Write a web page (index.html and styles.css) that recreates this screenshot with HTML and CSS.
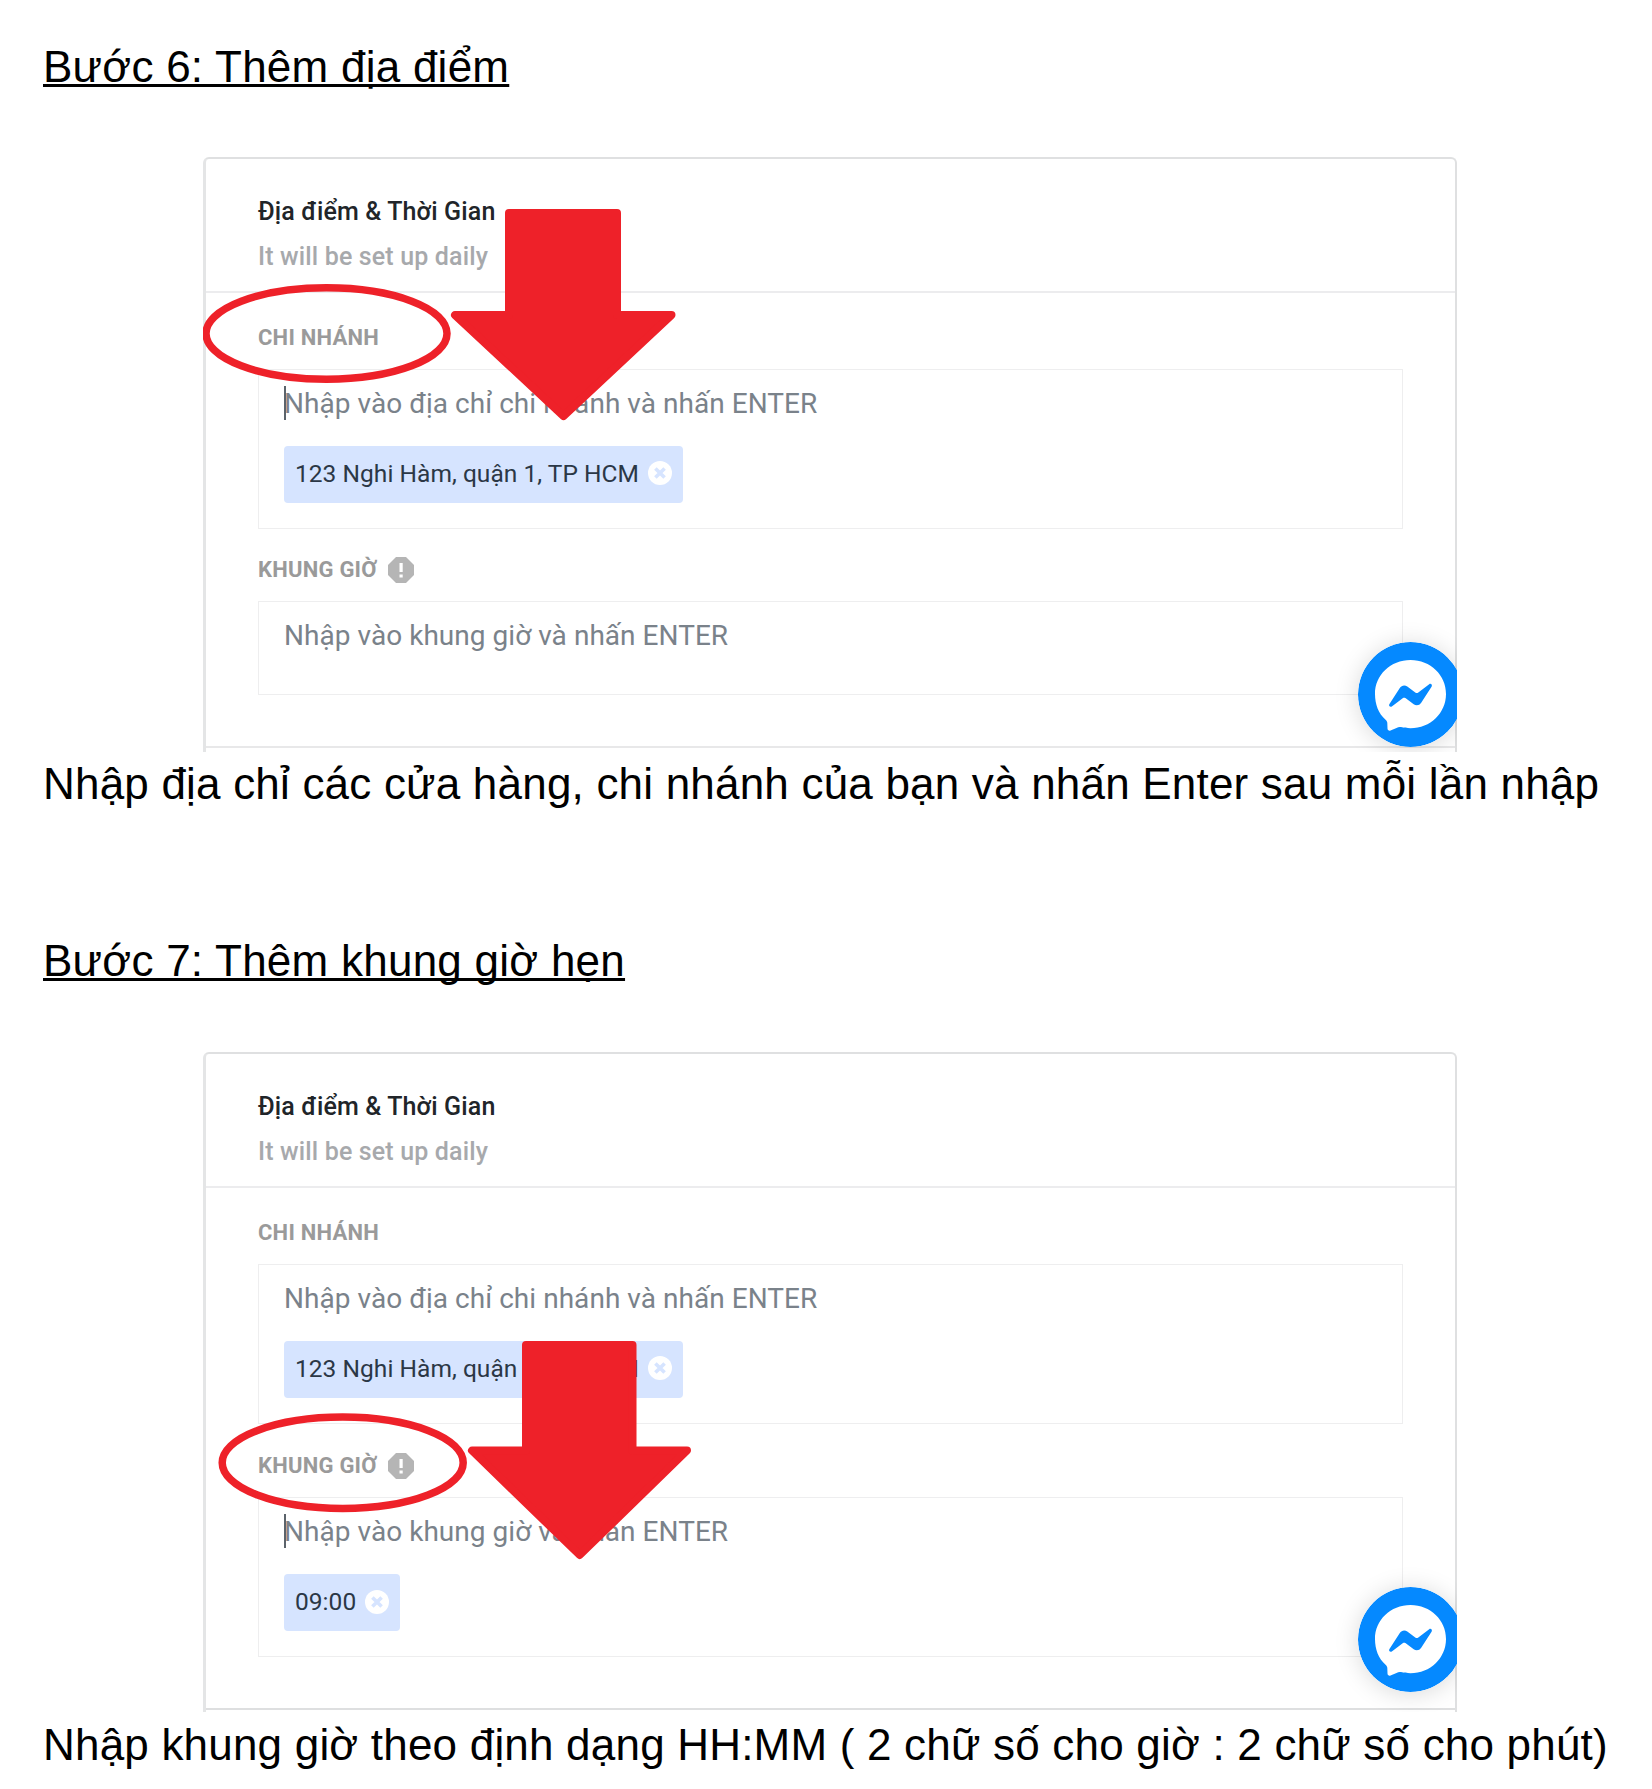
FILE: index.html
```html
<!DOCTYPE html>
<html lang="vi">
<head>
<meta charset="utf-8">
<title>Hướng dẫn</title>
<link rel="stylesheet" href="styles.css">
</head>
<body>
<svg class="defs" width="0" height="0" aria-hidden="true">
  <symbol id="remove" viewBox="0 0 24 24">
    <circle cx="12" cy="12" r="12" fill="#fff"/>
    <path d="M7.400 7.400l9.200 9.200M16.600 7.400l-9.200 9.200" stroke="#d6e4ff" stroke-width="3.6"/>
  </symbol>
  <symbol id="warn" viewBox="0 0 26 26">
    <path d="M8 0h10l8 8v10l-8 8H8l-8-8V8z" fill="#b5b5b5"/>
    <path d="M11.500 6h3.200v9h-3.200zM11.500 17.400h3.200v3.200h-3.200z" fill="#fff"/>
  </symbol>
  <symbol id="chat" viewBox="0 0 105 105">
    <circle cx="52.5" cy="52.5" r="52.5" fill="#0589ff"/>
    <path d="M52.5 18C72.500 18 88 33 88 52S72.500 86.300 52.500 86.300c-3.500 0-6.500-.400-9.500-1.200-1.500-.4-3 0-4.500 1l-6 2.500c-1.500.6-3-.4-3-2l-.2-5.600c0-1.500-.8-2.500-2-3.600C20.500 71.500 17 62.500 17 52 17 33 32.500 18 52.500 18z" fill="#fff"/>
    <path d="M31.300 62.300L41.800 46c1.700-2.700 5-3.300 7.500-1.500l8.300 6.200c.8.500 1.700.5 2.400 0l11.200-8.500c1.500-1.100 3.400.6 2.500 2.200L63.200 60.700c-1.700 2.700-5 3.300-7.500 1.500l-8.300-6.200c-.8-.5-1.700-.5-2.400 0l-11.200 8.500c-1.500 1.100-3.400-.6-2.500-2.200z" fill="#0589ff"/>
  </symbol>
</svg>
<main class="doc">
  <section class="step">
    <h2 class="heading"><span>Bước 6: Thêm địa điểm</span></h2>
    <figure class="shot shot-one">
      <div class="card">
        <header class="card-head">
          <p class="title">Địa điểm &amp; Thời Gian</p>
          <p class="sub">It will be set up daily</p>
        </header>
        <div class="card-body">
          <div class="label">CHI NHÁNH</div>
          <div class="field">
            <div class="hint caret">Nhập vào địa chỉ chi nhánh và nhấn ENTER</div>
            <div class="tag tag-branch"><span>123 Nghi Hàm, quận 1, TP HCM</span><svg class="x"><use href="#remove"/></svg></div>
          </div>
          <div class="label second"><span>KHUNG GIỜ</span><svg class="warn"><use href="#warn"/></svg></div>
          <div class="field">
            <div class="hint">Nhập vào khung giờ và nhấn ENTER</div>
          </div>
        </div>
      </div>
      <svg class="chat"><use href="#chat"/></svg>
      <svg class="marks" viewBox="203 157 1254 595">
        <ellipse class="ring" cx="326.500" cy="333.500" rx="120.500" ry="45.700"/>
        <path class="arrow" d="M509 213H617V315H671.500L563.500 416L455 315H509z"/>
      </svg>
    </figure>
    <p class="caption">Nhập địa chỉ các cửa hàng, chi nhánh của bạn và nhấn Enter sau mỗi lần nhập</p>
  </section>
  <section class="step step-two">
    <h2 class="heading"><span>Bước 7: Thêm khung giờ hẹn</span></h2>
    <figure class="shot shot-two">
      <div class="card">
        <header class="card-head">
          <p class="title">Địa điểm &amp; Thời Gian</p>
          <p class="sub">It will be set up daily</p>
        </header>
        <div class="card-body">
          <div class="label">CHI NHÁNH</div>
          <div class="field">
            <div class="hint">Nhập vào địa chỉ chi nhánh và nhấn ENTER</div>
            <div class="tag tag-branch"><span>123 Nghi Hàm, quận 1, TP HCM</span><svg class="x"><use href="#remove"/></svg></div>
          </div>
          <div class="label second"><span>KHUNG GIỜ</span><svg class="warn"><use href="#warn"/></svg></div>
          <div class="field">
            <div class="hint caret">Nhập vào khung giờ và nhấn ENTER</div>
            <div class="tag tag-time"><span>09:00</span><svg class="x"><use href="#remove"/></svg></div>
          </div>
        </div>
      </div>
      <svg class="chat"><use href="#chat"/></svg>
      <svg class="marks" viewBox="203 1052 1254 660">
        <ellipse class="ring" cx="342.700" cy="1462.700" rx="120.500" ry="45.700"/>
        <path class="arrow" d="M526 1345H632.500V1450.500H687L579.700 1555L472 1450.500H526z"/>
      </svg>
    </figure>
    <p class="caption">Nhập khung giờ theo định dạng HH:MM ( 2 chữ số cho giờ : 2 chữ số cho phút)</p>
  </section>
</main>
</body>
</html>
```
FILE: styles.css
```css
* { box-sizing: border-box; margin: 0; padding: 0; }
html, body { background: #fff; }
body { width: 1652px; height: 1789px; overflow: hidden; font-family: Roboto, sans-serif; }
.defs { display: block; }
.doc { padding-top: 42px; }
.heading, .caption {
  font: 400 44px/50px "Liberation Sans", Arial, sans-serif;
  letter-spacing: .25px;
  color: #000;
  padding-left: 43px;
  white-space: nowrap;
}
.caption { letter-spacing: .2px; }
.heading span {
  text-decoration: underline;
  text-decoration-thickness: 3px;
  text-underline-offset: 2px;
  text-decoration-skip-ink: none;
}
.step-two { margin-top: 127px; }
.shot {
  position: relative;
  width: 1254px;
  margin-left: 203px;
  overflow: hidden;
}
.shot-one { height: 595px; margin-top: 65px; margin-bottom: 7px; }
.shot-two { height: 660px; margin-top: 66px; margin-bottom: 8px; }
.card {
  height: 100%;
  border: 2px solid #dfe0e1;
  border-left: 3px solid #e4e5e6;
  border-bottom: 0;
  border-radius: 6px 6px 0 0;
}
.card-head {
  height: 134px;
  padding: 30px 0 0 52px;
  border-bottom: 2px solid #ececee;
  font-weight: 500;
  font-size: 25px;
  line-height: 45px;
  letter-spacing: .15px;
  white-space: nowrap;
}
.title { color: #212529; }
.sub { color: #a7a9ac; }
.card-body {
  padding: 32px 52px 51px 52px;
  border-bottom: 2px solid #e8e8e9;
}
.shot-two .card-body { border-bottom-color: #dedfe0; }
.label {
  display: flex;
  align-items: center;
  gap: 11px;
  height: 26px;
  margin-bottom: 18px;
  font-weight: 700;
  font-size: 22px;
  line-height: 26px;
  letter-spacing: .23px;
  color: #9a9a9a;
}
.label.second { margin-top: 28px; }
.shot-two .label.second { margin-top: 29px; }
.warn { width: 26px; height: 26px; }
.field {
  min-height: 94px;
  padding: 16px 25px 25px;
  border: 1px solid #eeeeef;
}
.hint {
  position: relative;
  height: 34px;
  font-size: 28px;
  line-height: 36px;
  letter-spacing: .04px;
  color: #7a828a;
  white-space: nowrap;
}
.caret::before {
  content: "";
  position: absolute;
  left: 0;
  top: 0;
  width: 2px;
  height: 34px;
  background: #5b636b;
}
.tag {
  display: flex;
  align-items: center;
  justify-content: space-between;
  height: 57px;
  margin-top: 26px;
  padding: 0 11px 3px;
  border-radius: 4px;
  background: #d6e4ff;
  color: #2b3746;
  font-size: 24.500px;
  letter-spacing: .04px;
  white-space: nowrap;
}
.tag-branch { width: 399px; }
.tag-time { width: 116px; padding-bottom: 2px; }
.x { width: 24px; height: 24px; flex: none; }
.chat {
  position: absolute;
  left: 1155px;
  top: 485px;
  width: 105px;
  height: 105px;
  border-radius: 50%;
  box-shadow: 0 2px 24px rgba(0, 0, 0, .15);
}
.shot-two .chat { top: 535px; }
.marks { position: absolute; inset: 0; width: 100%; height: 100%; }
.ring { fill: none; stroke: #ee2129; stroke-width: 7.500px; }
.arrow { fill: #ee2129; stroke: #ee2129; stroke-width: 8px; stroke-linejoin: round; }
```
